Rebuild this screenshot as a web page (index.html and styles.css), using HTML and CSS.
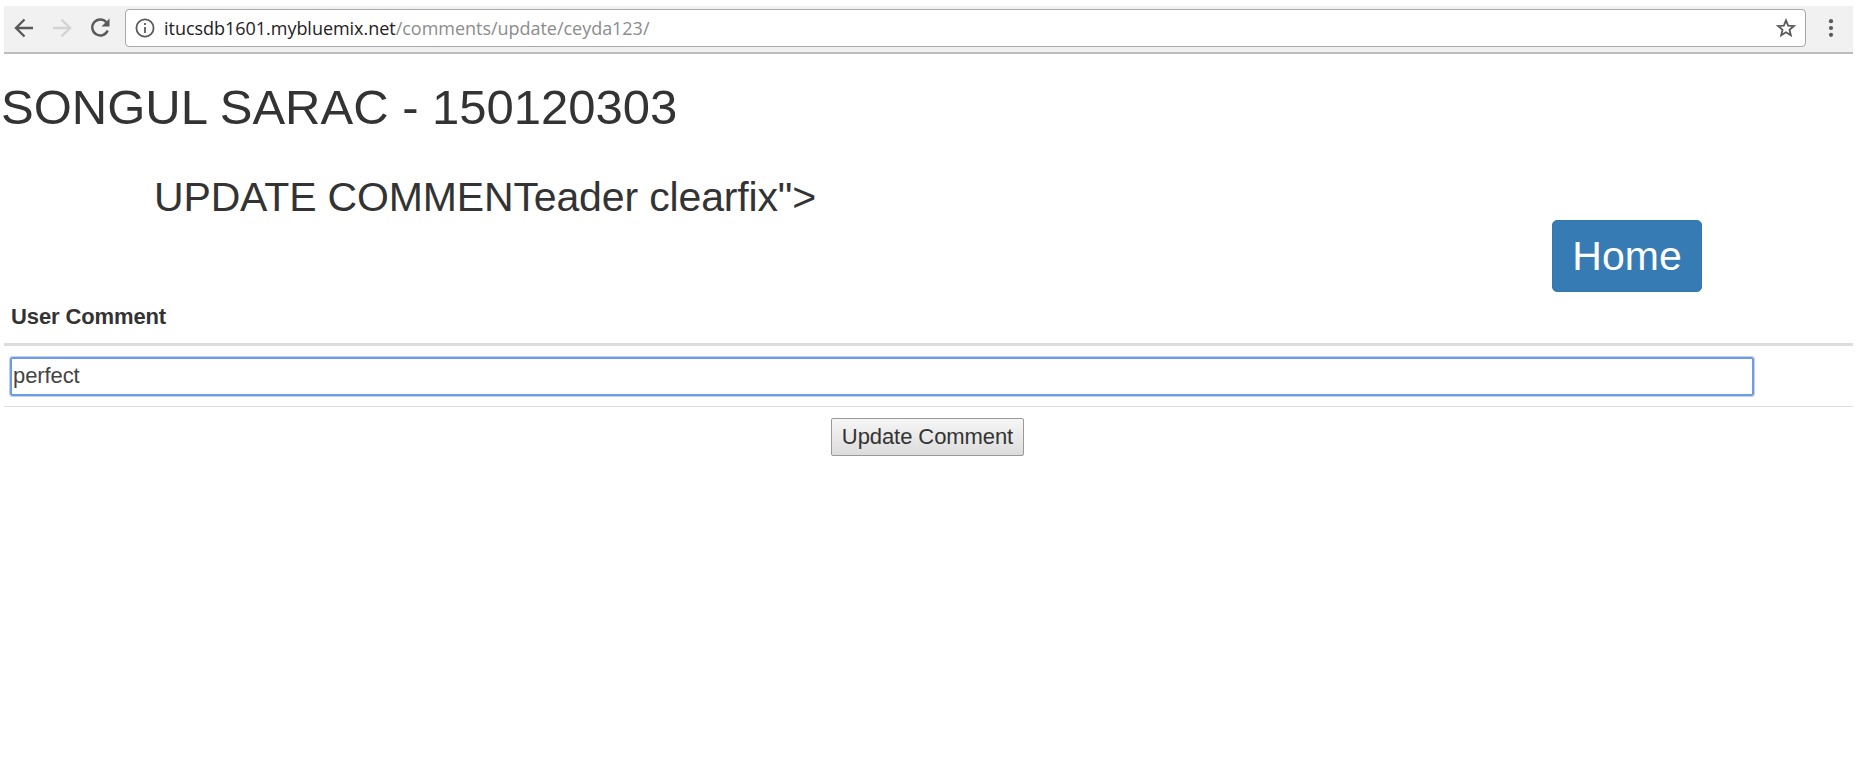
FILE: index.html
```html
<!DOCTYPE html>
<html lang="en">
<head>
<meta charset="utf-8">
<title>Update Comment</title>
<link rel="stylesheet" href="styles.css">
</head>
<body>
<div class="browser">
  <div class="toolbar">
    <svg class="icon back" viewBox="0 0 20 20"><path d="M19 10H2M10.500 1.500L2 10l8.500 8.500"/></svg>
    <svg class="icon forward" viewBox="0 0 20 20"><path d="M1 10h17M9.500 1.500L18 10l-8.500 8.500"/></svg>
    <svg class="icon reload" viewBox="0 0 20 20"><path d="M16.300 4.200A8 8 0 1 0 17.700 12.500"/><path class="solid" d="M19.500 0.500v8h-8z"/></svg>
    <div class="address">
      <svg class="icon info" viewBox="0 0 20 20"><circle cx="10" cy="10" r="8.600"/><path d="M10 9v6M10 5v2"/></svg>
      <div class="url">itucsdb1601.mybluemix.net<span class="path">/comments/update/ceyda123/</span></div>
      <svg class="icon star" viewBox="0 0 20 20"><path d="M10 2.300l2.150 5.300 5.700.45-4.350 3.700 1.350 5.550L10 14.300l-4.850 3 1.350-5.550-4.350-3.700 5.700-.45z"/></svg>
    </div>
    <svg class="icon menu" viewBox="0 0 6 20"><circle cx="3" cy="3.200" r="2.100"/><circle cx="3" cy="10" r="2.100"/><circle cx="3" cy="16.800" r="2.100"/></svg>
  </div>
  <main>
    <h1>SONGUL SARAC - 150120303</h1>
    <div class="container">
      <h2>UPDATE COMMENTeader clearfix"&gt;</h2>
      <a class="home" href="#">Home</a>
    </div>
    <div class="table">
      <div class="head">User Comment</div>
      <div class="cell"><input class="comment" type="text" value="perfect"></div>
      <div class="action"><button class="submit" type="button">Update Comment</button></div>
    </div>
  </main>
</div>
</body>
</html>
```
FILE: styles.css
```css
* { box-sizing: border-box; }
body {
  margin: 0;
  background: #fff;
  color: #333;
  font-family: "Liberation Sans", Arial, sans-serif;
  font-size: 22px;
  overflow: hidden;
}
.browser { padding: 6px 10px 0 4px; }
.toolbar {
  display: flex;
  align-items: center;
  height: 48px;
  padding: 0 19px 3px 10px;
  background: #f1f1f1;
  border-bottom: 2px solid #bdbdbd;
}
.icon {
  flex: none;
  width: 20px;
  height: 20px;
  fill: none;
  stroke: #5a5a5a;
  stroke-width: 2.400;
}
.forward { margin-left: 18px; stroke: #d3d3d3; }
.reload { margin-left: 18px; }
.solid { fill: #5a5a5a; stroke: none; }
.address {
  display: flex;
  align-items: center;
  flex: 1;
  height: 38px;
  margin-left: 15px;
  padding: 0 9px;
  background: #fff;
  border: 1.500px solid #a8a8a8;
  border-radius: 4px;
}
.info { stroke-width: 1.800; }
.url {
  flex: 1;
  margin-left: 9px;
  color: #222;
  font-family: "Open Sans", "Noto Sans", sans-serif;
  font-size: 18px;
  letter-spacing: -0.030px;
}
.path { color: #8c8c8c; }
.star { stroke-width: 1.800; }
.menu { width: 6px; margin-left: 22px; fill: #5a5a5a; stroke: none; }
h1, h2 { margin: 0; font-weight: 400; white-space: nowrap; }
h1 {
  margin-left: -3px;
  padding-top: 26px;
  font-size: 49px;
  line-height: 54px;
}
.container {
  display: flex;
  flex-direction: column;
  padding: 40px 151px 0 150px;
}
h2 { font-size: 41px; line-height: 46px; letter-spacing: -0.150px; }
.home {
  align-self: flex-end;
  width: 150px;
  height: 72px;
  border: 1px solid #3576b0;
  border-radius: 5px;
  background: #377bb5;
  color: #fff;
  font-size: 41px;
  line-height: 70px;
  text-align: center;
  text-decoration: none;
}
.head {
  height: 54px;
  padding: 11px 7px 0;
  border-bottom: 3px solid #ddd;
  font-weight: 700;
  line-height: 28px;
  letter-spacing: -0.120px;
}
.cell { height: 61px; padding: 11px 6px 0; border-bottom: 1px solid #ddd; }
.comment {
  display: block;
  width: 1744px;
  height: 39px;
  padding: 0 1px 2px;
  border: 2px solid #709be0;
  border-radius: 2px;
  outline: 1px solid #bcd3f7;
  color: #444;
  font: inherit;
  letter-spacing: -0.100px;
}
.action { display: flex; justify-content: center; padding: 11px 2px 0 0; }
.submit {
  width: 193px;
  height: 38px;
  padding: 0 0 1px;
  border: 1px solid #999;
  border-radius: 2px;
  background: linear-gradient(#f6f6f6, #dcdcdc);
  color: #333;
  font: inherit;
  letter-spacing: -0.080px;
}
```
